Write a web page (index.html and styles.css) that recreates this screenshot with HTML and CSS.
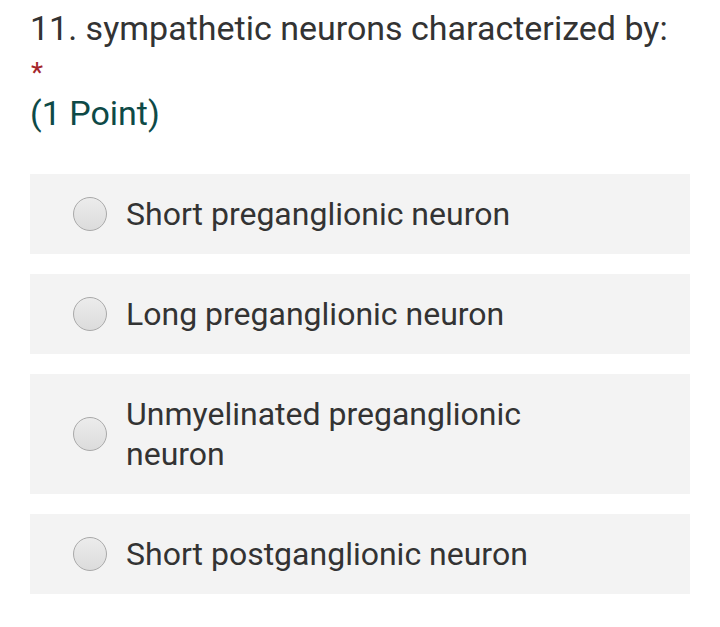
FILE: index.html
```html
<!DOCTYPE html>
<html>
<head>
<meta charset="utf-8">
<link rel="stylesheet" href="styles.css">
</head>
<body>
<div class="question">
  <div class="title">11. sympathetic neurons characterized by:</div>
  <div class="required">*</div>
  <div class="points">(1 Point)</div>
  <div class="options">
    <div class="option"><span class="radio"></span><span class="label">Short preganglionic neuron</span></div>
    <div class="option"><span class="radio"></span><span class="label">Long preganglionic neuron</span></div>
    <div class="option"><span class="radio"></span><span class="label">Unmyelinated preganglionic<br>neuron</span></div>
    <div class="option"><span class="radio"></span><span class="label">Short postganglionic neuron</span></div>
  </div>
</div>
</body>
</html>
```
FILE: styles.css
```css
html, body {
  margin: 0;
  padding: 0;
  background: #ffffff;
}
body {
  font-family: Roboto, "Noto Sans", sans-serif;
  color: #333333;
}
.question {
  padding: 8px 30px 0 30px;
}
.title {
  font-size: 34px;
  line-height: 40px;
  color: #333333;
}
.required {
  font-size: 28px;
  line-height: 34px;
  color: #a4262c;
  padding-top: 8px;
  padding-left: 1px;
}
.points {
  font-size: 34px;
  line-height: 44px;
  color: #0e4a47;
  padding-top: 1px;
}
.options {
  margin-top: 39px;
  display: flex;
  flex-direction: column;
  gap: 20px;
}
.option {
  background: #f3f3f3;
  display: flex;
  align-items: center;
  min-height: 80px;
  padding: 0 0 0 43px;
  box-sizing: border-box;
}
.option:nth-child(3) {
  min-height: 120px;
}
.radio {
  flex: none;
  width: 32px;
  height: 32px;
  border-radius: 50%;
  border: 1px solid #a9a9a9;
  background: linear-gradient(#ececec, #dcdcdc);
  margin-right: 19px;
}
.label {
  font-size: 32px;
  line-height: 40px;
  color: #333333;
}
```
